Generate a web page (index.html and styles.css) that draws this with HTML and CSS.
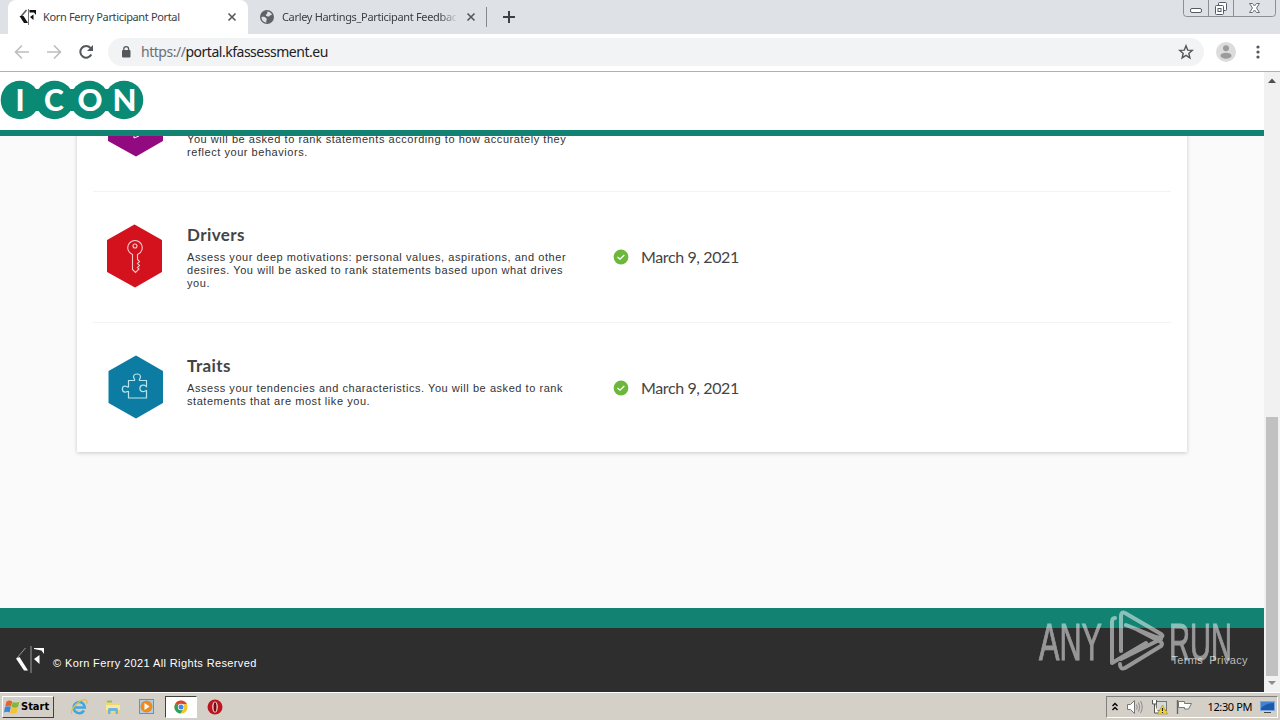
FILE: index.html
```
<!DOCTYPE html>
<html lang="en">
<head>
    <meta charset="UTF-8">
    <title>Korn Ferry Participant Portal</title>
    <link rel="stylesheet" href="styles.css">
</head>
<body>

<!-- Tab strip -->
<div class="tabs">
    <div class="tab tab-active">
        <svg class="tab-icon" width="18" height="16" viewBox="0 0 18 16">
            <path d="M7.500 1L2 7.500" stroke="#555" stroke-width="1.500" fill="none"/>
            <path d="M.5 7h4L9 14H5z" fill="#111"/>
            <path d="M9.500 0v16" stroke="#777"/>
            <path d="M10.500 1H17v5l-2-2.500h-4.500zM11 8l3.500-2.500v5.500z" fill="#111"/>
        </svg>
        <span class="tab-title title-one">Korn Ferry Participant Portal</span>
        <svg class="tab-close" width="10" height="10" viewBox="0 0 10 10"><path d="M1.500 1.500l7 7M8.500 1.500l-7 7" stroke="#54575b" stroke-width="1.600"/></svg>
    </div>
    <div class="tab tab-second">
        <svg class="tab-icon" width="16" height="16" viewBox="0 0 16 16">
            <circle cx="8" cy="8" r="7" fill="#5f6368"/>
            <path d="M2.500 8c2-.5 4 0 5 1.500s-1 2 0 4c-3 0-5-2.500-5-5.500zM8 2.500c2 0 4 1 5 3-1 1-2 .5-2.500 1.500S8 7.500 7 6.500 9.500 5 8 2.500z" fill="#dee1e6"/>
        </svg>
        <span class="tab-title title-two">Carley Hartings_Participant Feedbac</span>
        <svg class="tab-close" width="10" height="10" viewBox="0 0 10 10"><path d="M1.500 1.500l7 7M8.500 1.500l-7 7" stroke="#54575b" stroke-width="1.600"/></svg>
    </div>
    <span class="tab-divider"></span>
    <svg class="new-tab" width="12" height="12" viewBox="0 0 12 12"><path d="M6 0v12M0 6h12" stroke="#3c4043" stroke-width="2"/></svg>
    <svg class="window-buttons" width="94" height="18" viewBox="0 0 94 18">
        <path d="M.5 0v13.500q0 3 3 3h86q3 0 3-3V0M25.500 0v16M50.500 0v16" fill="none" stroke="#8b8f97"/>
        <rect x="7.500" y="8.500" width="11" height="4" rx="1.500" fill="#fff" stroke="#555a66"/>
        <rect x="35.500" y="2.500" width="8" height="8" rx="1" fill="#fff" stroke="#555a66"/>
        <rect x="32.500" y="5.500" width="8" height="9" rx="1" fill="#fff" stroke="#555a66"/>
        <rect x="35" y="8.500" width="3" height="3" fill="#fff" stroke="#555a66"/>
        <path d="M66.500 3.500h3l2 2.500 2-2.500h3L73.500 8l3 4.500h-3l-2-2.500-2 2.500h-3l3-4.500z" fill="#fff" stroke="#6a6e78"/>
    </svg>
</div>

<!-- Address bar -->
<div class="toolbar">
    <svg class="nav-icon" width="16" height="16" viewBox="0 0 16 16"><path d="M15 8H2M8 1.500L1.500 8 8 14.500" fill="none" stroke="#bbbdc0" stroke-width="1.600"/></svg>
    <svg class="nav-icon" width="16" height="16" viewBox="0 0 16 16"><path d="M1 8h13M8 1.500L14.500 8 8 14.500" fill="none" stroke="#bbbdc0" stroke-width="1.600"/></svg>
    <svg class="nav-icon" width="16" height="16" viewBox="0 0 16 16">
        <path d="M13.300 10.500A5.800 5.800 0 1 1 12.500 4" fill="none" stroke="#54575b" stroke-width="2"/>
        <path d="M15 1v6H9z" fill="#54575b"/>
    </svg>
    <div class="address">
        <svg width="10" height="14" viewBox="0 0 10 14">
            <rect x="1" y="5" width="8.500" height="7.500" rx="1" fill="#54575b"/>
            <path d="M2.800 5.500V4a2.400 2.400 0 0 1 4.800 0v1.500" fill="none" stroke="#54575b" stroke-width="1.300"/>
        </svg>
        <span class="url"><span class="scheme">https://</span>portal.kfassessment.eu</span>
        <svg class="star" width="16" height="16" viewBox="0 0 16 16"><path d="M8 1.800l1.700 4.300 4.600.3-3.500 3 1.100 4.500L8 11.400l-3.900 2.500 1.100-4.500-3.500-3 4.600-.3z" fill="none" stroke="#54575b" stroke-width="1.400"/></svg>
    </div>
    <svg class="avatar" width="20" height="20" viewBox="0 0 20 20">
        <circle cx="10" cy="10" r="10" fill="#dcdcdc"/>
        <circle cx="10" cy="6.300" r="3" fill="#9b9b9b"/>
        <ellipse cx="10" cy="13.700" rx="5.500" ry="3" fill="#9b9b9b"/>
    </svg>
    <svg class="menu" width="4" height="14" viewBox="0 0 4 14"><circle cx="2" cy="2" r="1.600" fill="#54575b"/><circle cx="2" cy="7" r="1.600" fill="#54575b"/><circle cx="2" cy="12" r="1.600" fill="#54575b"/></svg>
</div>

<div class="viewport">
    <div class="page">
        <header class="header">
            <svg class="logo" width="144" height="40" viewBox="0 0 144 40">
                <g fill="#0a8a75">
                    <circle cx="20" cy="20" r="19.300"/>
                    <circle cx="54.500" cy="20" r="19.300"/>
                    <circle cx="89.500" cy="20" r="19.300"/>
                    <circle cx="124" cy="20" r="19.300"/>
                    <path d="M32 9h10v22H32zM67 9h10v22H67zM102 9h10v22h-10z"/>
                </g>
                <g class="logo-letters">
                    <text x="20" y="31">I</text>
                    <text x="54" y="31">C</text>
                    <text x="90" y="31" textLength="25" lengthAdjust="spacingAndGlyphs">O</text>
                    <text x="124.500" y="31" textLength="24" lengthAdjust="spacingAndGlyphs">N</text>
                </g>
            </svg>
        </header>

        <main class="content">
            <div class="card">
                <div class="row">
                    <svg class="hex" width="58" height="64" viewBox="0 0 58 64">
                        <path d="M28.500 1L55 16.500v31L29 62.500 2 47.500v-31z" fill="#920a80" stroke="#920a80" stroke-linejoin="round" stroke-width="2"/>
                        <path d="M27 43v2l5-2" fill="none" stroke="#fff"/>
                    </svg>
                    <div class="info info-scrolled">
                        <p class="desc">You will be asked to rank statements according to how accurately they<br>reflect your behaviors.</p>
                    </div>
                </div>
                <div class="row">
                    <svg class="hex" width="58" height="64" viewBox="0 0 58 64">
                        <path d="M27.500 1.500L54 16.500v31L28 62.500 1 47.500v-31z" fill="#d4121d" stroke="#d4121d" stroke-linejoin="round" stroke-width="2"/>
                        <path d="M25.500 30.500A7.200 7.200 0 1 1 30.500 30.500v5l2 2-2 2 2 2-2 2 1.500 1.500-3.500 3.500-3-3z" fill="none" stroke="#f6c9cb" stroke-width="1.100"/>
                        <circle cx="28" cy="22" r="2" fill="none" stroke="#f6c9cb" stroke-width="1.100"/>
                    </svg>
                    <div class="info">
                        <h3>Drivers</h3>
                        <p class="desc">Assess your deep motivations: personal values, aspirations, and other<br>desires. You will be asked to rank statements based upon what drives<br>you.</p>
                    </div>
                    <div class="status">
                        <svg width="16" height="16" viewBox="0 0 16 16"><circle cx="8" cy="8" r="7.400" fill="#6db83c"/><path d="M4.500 8l2.500 2.200 4.300-4.200" fill="none" stroke="#fff" stroke-width="1.300"/></svg>
                        <span>March 9, 2021</span>
                    </div>
                </div>
                <div class="row">
                    <svg class="hex" width="58" height="64" viewBox="0 0 58 64">
                        <path d="M29 1.500L55 16.500v31L29 62.500 2.500 47.500v-31z" fill="#0d7ca3" stroke="#0d7ca3" stroke-linejoin="round" stroke-width="2"/>
                        <path d="M21.500 25.500h6c1-1.500-1-2-1-3.500 0-4 7-4 7 0 0 1.500-2 2-1 3.500h7v6c-2-1.500-3-1.500-4-1.300-3.500.8-3.500 6 0 6.500 1.500.2 2.500-.7 4-1.200v7.500h-18v-6.500c-1.500-.5-2 1-3.500.7-3.500-.5-3.500-6 0-6.200 1.500 0 2 1.500 3.500 1z" fill="none" stroke="#b9e3ef" stroke-width="1.200"/>
                    </svg>
                    <div class="info">
                        <h3>Traits</h3>
                        <p class="desc">Assess your tendencies and characteristics. You will be asked to rank<br>statements that are most like you.</p>
                    </div>
                    <div class="status">
                        <svg width="16" height="16" viewBox="0 0 16 16"><circle cx="8" cy="8" r="7.400" fill="#6db83c"/><path d="M4.500 8l2.500 2.200 4.300-4.200" fill="none" stroke="#fff" stroke-width="1.300"/></svg>
                        <span>March 9, 2021</span>
                    </div>
                </div>
            </div>
        </main>

        <footer class="footer">
            <svg width="30" height="28" viewBox="0 0 30 28">
                <path d="M10.500 2L2 12" stroke="#999" fill="none"/>
                <path d="M1 12.500L4.500 11 13 24.500H9z" fill="#fff"/>
                <path d="M16 0v27" stroke="#999"/>
                <path d="M19 2h10v6L26.500 4.500 19 3zM19 13l5.500-4v9z" fill="#fff"/>
            </svg>
            <span class="copyright">© Korn Ferry 2021 All Rights Reserved</span>
            <span class="links"><span>Terms</span><span>Privacy</span></span>
        </footer>
    </div>

    <div class="scrollbar">
        <svg width="16" height="16" viewBox="0 0 16 16"><path d="M4 11l4-4.500 4 4.500z" fill="#505050"/></svg>
        <div class="thumb"></div>
        <svg width="16" height="16" viewBox="0 0 16 16"><path d="M4 5l4 4 4-4z" fill="#8c8c8c"/></svg>
    </div>
</div>

<!-- Windows taskbar -->
<div class="taskbar">
    <div class="start">
        <svg width="16" height="16" viewBox="0 0 16 16">
            <path d="M2.500 2.500q3-1.800 5.700 0L7 7.500q-2.500-1.500-5.800 0z" fill="#e8602c"/>
            <path d="M8.700 2.900q3 1.400 6.600-.2L14 8q-3 1.500-6.500 0z" fill="#7fb83a"/>
            <path d="M1 8q2.700-1.700 5.800 0L5.500 13.500q-2.700-1.600-5.500 0z" fill="#3f85d6"/>
            <path d="M7.300 8.500q3 1.500 6.500 0L12.500 14q-3 1.500-6.400 0z" fill="#f5c331"/>
        </svg>
        <span>Start</span>
    </div>
    <div class="launch">
        <svg width="18" height="18" viewBox="0 0 18 18">
            <path d="M14 12.500A5.600 5.600 0 1 1 14.800 9.500H4.500" fill="none" stroke="#42a6de" stroke-width="2.600"/>
            <path d="M2 16C-1.500 12 12-1.500 16.500 2.500c1 1 .5 2.500 0 3.500" fill="none" stroke="#e0c04c" stroke-width="1.200"/>
        </svg>
        <svg width="18" height="18" viewBox="0 0 18 18">
            <path d="M2 4h5l1 1.500h7V15H2z" fill="#f0d775"/>
            <path d="M3 2.500h5v2H3z" fill="#8dc06c"/>
            <path d="M2 7h14v5H2z" fill="#f7e9a4"/>
            <path d="M4 16v-4.500q0-1.500 1.500-1.500h7q1.500 0 1.500 1.500V16h-2.500v-3h-5v3z" fill="#6fb3e0"/>
        </svg>
        <svg width="18" height="18" viewBox="0 0 18 18">
            <rect x="1.500" y="1.500" width="14" height="14" fill="#a8d0f0" stroke="#5796cc"/>
            <circle cx="8.500" cy="8.500" r="6" fill="#f08a1d"/>
            <path d="M6.500 5l5 3.500-5 3.500z" fill="#fff"/>
        </svg>
        <div class="launch-active">
            <svg width="14" height="14" viewBox="0 0 14 14">
                <circle cx="7" cy="7" r="6.600" fill="#f4c52c"/>
                <path d="M7 7L1.300 3.700A6.600 6.600 0 0 1 12.800 3.900H7z" fill="#db4437"/>
                <path d="M7 7L1.300 3.700A6.600 6.600 0 0 0 6.500 13.600L9.500 8.500z" fill="#2f9e57"/>
                <circle cx="7" cy="7" r="3.200" fill="#fff"/>
                <circle cx="7" cy="7" r="2.500" fill="#4285f4"/>
            </svg>
        </div>
        <svg width="18" height="18" viewBox="0 0 18 18">
            <circle cx="9" cy="9" r="7.500" fill="#bb1520"/>
            <ellipse cx="9" cy="9" rx="2.800" ry="5.500" fill="#f6dada"/>
            <ellipse cx="9" cy="9" rx="1.500" ry="4.800" fill="#6f0d12"/>
        </svg>
    </div>
    <div class="tray">
        <svg width="8" height="10" viewBox="0 0 8 10"><path d="M1.500 4L4 1.500 6.500 4M1.500 8L4 5.500 6.500 8" fill="none" stroke="#000" stroke-width="1.400"/></svg>
        <svg width="18" height="16" viewBox="0 0 18 16">
            <path d="M1.500 5.500h3l4-4v13l-4-4h-3z" fill="#fff" stroke="#777"/>
            <path d="M10.500 5.500q1.500 2.500 0 5M12.500 3.500q2.500 4.500 0 9M14.500 2q3.500 6 0 12" fill="none" stroke="#8c8c8c"/>
        </svg>
        <svg width="18" height="16" viewBox="0 0 18 16">
            <rect x="5.500" y="2.500" width="10" height="9" fill="#d6d9dd" stroke="#777"/>
            <path d="M1.500 1v4h4V1M3.500 5v9h4" fill="#fff" stroke="#555"/>
            <path d="M11.500 6l5 9h-10z" fill="#f9d71c" stroke="#a08a10" stroke-width=".6"/>
            <path d="M11.500 9v3M11.500 13v1" stroke="#222" stroke-width="1.200"/>
        </svg>
        <svg width="18" height="16" viewBox="0 0 18 16">
            <path d="M1.500 1v14" stroke="#666" stroke-width="1.400"/>
            <path d="M2.500 2.500h6v2h7l-3 5.500h-4V8.500h-6z" fill="#fff" stroke="#777"/>
        </svg>
        <span class="clock">12:30 PM</span>
        <svg width="18" height="14" viewBox="0 0 18 14">
            <rect x="1.500" y="1.500" width="14" height="9" fill="#1c59ad" stroke="#7fa6d8"/>
            <path d="M2 8q6-5 13-5v-1H2z" fill="#3f83d2"/>
            <path d="M5 12.500h7" stroke="#444"/>
        </svg>
    </div>
</div>

<!-- ANY.RUN watermark over the footer -->
<svg class="watermark" width="200" height="64" viewBox="0 0 200 64">
    <g fill="#fff" stroke="#fff" stroke-width="1" font-size="51">
        <text x="3" y="51" textLength="63" lengthAdjust="spacingAndGlyphs">ANY</text>
        <text x="133" y="51" textLength="63" lengthAdjust="spacingAndGlyphs">RUN</text>
    </g>
    <g fill="none" stroke="#fff" stroke-width="4" stroke-linecap="round" stroke-linejoin="round">
        <path d="M79 9q-3 0-3 4v41l34-20"/>
        <path d="M85 42V7q0-5 4-3l36 21q3 2 0 3-2 1-5 0L90 16"/>
        <path d="M85 50l40-20M84 55q0 6 5 4l36-22q2-2 0-4L102 21"/>
    </g>
</svg>

</body>
</html>
```
FILE: styles.css
```
* {
    box-sizing: border-box;
}
body {
    margin: 0;
    width: 1280px;
    height: 720px;
    display: flex;
    flex-direction: column;
    overflow: hidden;
    font-family: "Liberation Sans", Arial, sans-serif;
    background: #fff;
    position: relative;
    white-space: nowrap;
}
svg {
    display: block;
    flex: none;
}

/* Tab strip */
.tabs {
    height: 34px;
    flex: none;
    display: flex;
    align-items: center;
    background: #dee1e6;
    padding-left: 8px;
    font: 11px "Noto Sans", Tahoma, sans-serif;
    color: #3c4043;
}
.tab {
    height: 34px;
    display: flex;
    align-items: center;
}
.tab-active {
    width: 240px;
    padding: 0 11px;
    background: #fff;
    border-radius: 8px 8px 0 0;
}
.tab-second {
    width: 238px;
    padding: 0 10px 0 11px;
}
.tab-title {
    margin: -2px 0 0 6px;
    overflow: hidden;
}
.title-one {
    letter-spacing: -0.35px;
}
.title-two {
    width: 176px;
    margin-left: 7px;
    letter-spacing: -0.33px;
    -webkit-mask-image: linear-gradient(to right, #000 158px, transparent 176px);
}
.tab-close {
    margin-left: auto;
}
.tab-divider {
    width: 1px;
    height: 20px;
    background: #85888d;
}
.new-tab {
    margin-left: 16px;
}
.window-buttons {
    margin: 0 3px 0 auto;
    align-self: flex-start;
}

/* Toolbar */
.toolbar {
    height: 38px;
    flex: none;
    display: flex;
    align-items: center;
    padding: 0 20px 2px 14px;
    border-bottom: 1px solid #b0b0b0;
}
.nav-icon {
    margin-right: 16px;
}
.address {
    flex: 1;
    height: 28px;
    display: flex;
    align-items: center;
    margin-left: -2px;
    padding: 0 10px 0 13px;
    border-radius: 14px;
    background: #f1f3f4;
}
.url {
    margin-left: 10px;
    font: 14px "Noto Sans", Tahoma, sans-serif;
    letter-spacing: -0.48px;
    color: #202124;
}
.scheme {
    color: #6b6f74;
}
.star {
    margin-left: auto;
}
.avatar {
    margin-left: 12px;
}
.menu {
    margin-left: 20px;
}

/* Web page */
.viewport {
    height: 620px;
    flex: none;
    display: flex;
}
.page {
    flex: 1;
    display: flex;
    flex-direction: column;
    background: #fafafa;
}
.header {
    height: 64px;
    flex: none;
    padding-top: 8px;
    background: #fff;
    border-bottom: 6px solid #128272;
}
.logo-letters {
    font: 900 30px Lato, sans-serif;
    fill: #fff;
    text-anchor: middle;
}
.content {
    flex: 1;
    min-height: 0;
    overflow: hidden;
}
.card {
    margin: -75px 77px 0;
    padding: 0 16px;
    background: #fff;
    box-shadow: 0 1px 4px rgba(0, 0, 0, 0.2);
}
.row {
    height: 131px;
    display: flex;
    align-items: flex-start;
    padding: 32px 0 0 14px;
    border-bottom: 1px solid #f3f3f3;
}
.row:last-child {
    height: 129px;
    border-bottom: 0;
}
.info {
    width: 426px;
    margin-left: 22px;
}
.info-scrolled {
    padding-top: 40px;
}
.info h3 {
    margin: 0;
    font: bold 17px/21px Lato, sans-serif;
    letter-spacing: 0.4px;
    color: #444;
}
.desc {
    margin: 6px 0 0;
    font-size: 11px;
    line-height: 13px;
    letter-spacing: 0.55px;
    color: #333;
}
.info-scrolled .desc {
    margin: 0;
}
.status {
    display: flex;
    align-items: center;
    gap: 12px;
    margin-top: 21px;
    font: 16px/24px Lato, sans-serif;
    letter-spacing: -0.38px;
    color: #444;
}

/* Footer */
.footer {
    height: 84px;
    flex: none;
    display: flex;
    align-items: center;
    padding: 0 16px 0 15px;
    border-top: 20px solid #128272;
    background: #2e2e2e;
    color: #fff;
    font-size: 11px;
    letter-spacing: 0.38px;
}
.copyright {
    margin: 6px 0 0 8px;
}
.links {
    display: flex;
    gap: 6px;
    margin-left: auto;
    color: #bbb;
}

/* Scrollbar */
.scrollbar {
    width: 16px;
    display: flex;
    flex-direction: column;
    justify-content: space-between;
    background: #f1f1f1;
}
.thumb {
    height: 259px;
    margin: auto 2px 0;
    background: #c1c1c1;
}

/* Taskbar */
.taskbar {
    height: 28px;
    display: flex;
    align-items: center;
    padding: 0 2px;
    background: #d4d0c8;
    border-top: 1px solid #fff;
    color: #000;
}
.start {
    width: 52px;
    height: 22px;
    display: flex;
    align-items: center;
    gap: 1px;
    padding-left: 1px;
    border: 1px solid;
    border-color: #fff #404040 #404040 #fff;
    font: bold 11px "DejaVu Sans Condensed", Tahoma, sans-serif;
}
.launch {
    display: flex;
    align-items: center;
    gap: 16px;
    margin-left: 16px;
}
.launch-active {
    width: 32px;
    height: 22px;
    margin: 0 -7px 0 -7px;
    display: flex;
    align-items: center;
    justify-content: center;
    background: #fff;
    border: 1px solid;
    border-color: #404040 #fff #fff #404040;
}
.tray {
    width: 172px;
    height: 22px;
    display: flex;
    align-items: center;
    margin-left: auto;
    padding: 0 0 0 4px;
    gap: 7px;
    border: 1px solid;
    border-color: #808080 #fff #fff #808080;
}
.clock {
    margin-left: auto;
    font: 11px "Noto Sans", Tahoma, sans-serif;
    letter-spacing: -0.4px;
}

.watermark {
    position: absolute;
    left: 1036px;
    top: 609px;
    opacity: 0.5;
}
```
